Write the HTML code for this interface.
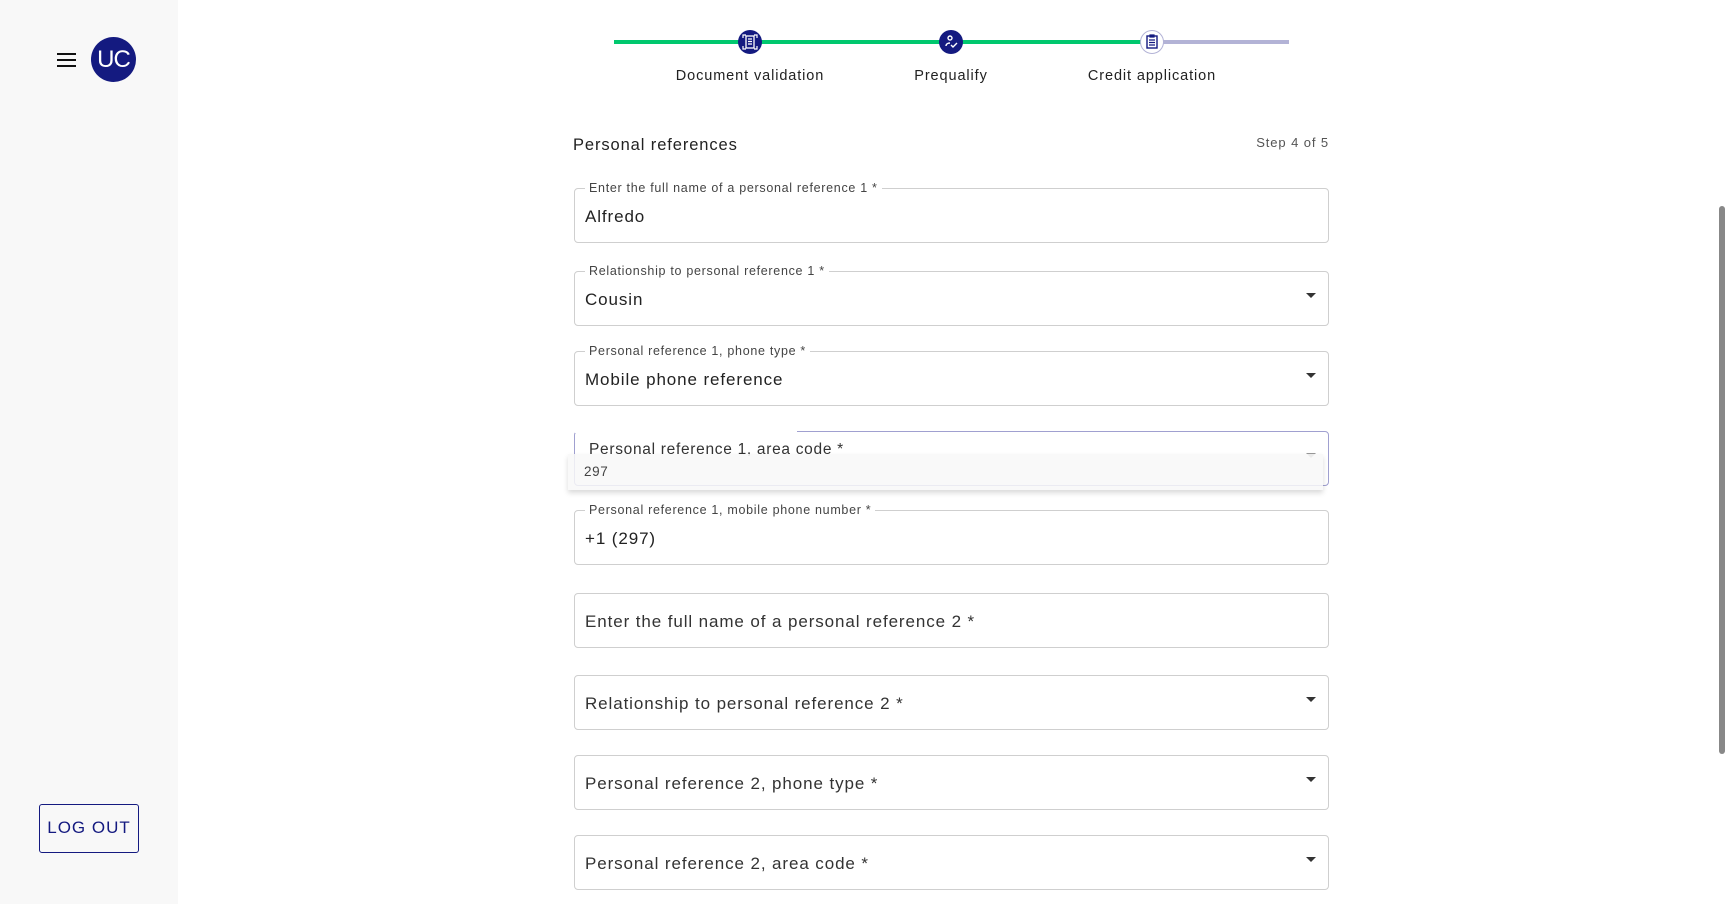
<!DOCTYPE html>
<html><head><style>
*{box-sizing:border-box;margin:0;padding:0}
body{width:1728px;height:904px;overflow:hidden;background:#fff;font-family:"Liberation Sans",sans-serif;color:#222;position:relative;letter-spacing:.6px}
.side{position:absolute;left:0;top:0;width:178px;height:904px;background:#f8f8f8}
.ham{position:absolute;left:57px;top:53px;width:19px}
.ham i{display:block;height:2px;background:#111;margin-bottom:4px}
.av{position:absolute;left:91px;top:37px;width:45px;height:45px;border-radius:50%;background:#141a80;color:#fff;font-size:24px;line-height:45px;text-align:center;letter-spacing:-1px}
.lo{position:absolute;left:39px;top:804px;width:100px;height:49px;border:1.5px solid #141a80;border-radius:3px;color:#141a80;font-size:17px;line-height:46px;text-align:center;letter-spacing:1px}
.line{position:absolute;top:40px;height:4px}
.dot{position:absolute;top:30px;width:24px;height:24px;border-radius:50%;background:#141a80}
.lbl{position:absolute;top:68px;font-size:14.5px;transform:translateX(-50%);white-space:nowrap;color:#222;letter-spacing:.9px}
.f{position:absolute;left:574px;width:755px;height:55px;border:1px solid #cfcfcf;border-radius:4px}
.f .l{position:absolute;left:10px;top:-8px;background:#fff;padding:0 4px;font-size:12.5px;color:#444;letter-spacing:.7px}
.f .v{position:absolute;left:10px;top:18px;font-size:17px;color:#222;letter-spacing:.9px}
.f .p{position:absolute;left:10px;top:18px;font-size:17px;color:#333;letter-spacing:.9px}
.ar{position:absolute;right:12px;top:21px;width:0;height:0;border-left:5px solid transparent;border-right:5px solid transparent;border-top:5px solid #333}
.sb{position:absolute;left:1719px;top:206px;width:6px;height:548px;background:#888;border-radius:3px}
</style></head><body>
<div class="side"><div class="ham"><i></i><i></i><i></i></div><div class="av">UC</div><div class="lo">LOG OUT</div></div>
<div class="line" style="left:614px;width:528px;background:#00c86e"></div>
<div class="line" style="left:1152px;width:137px;background:#b3b3d6"></div>
<div class="dot" style="left:738px"><svg width="24" height="24" viewBox="0 0 24 24"><rect x="8" y="6" width="8" height="12" fill="none" stroke="#fff" stroke-width="1.3"/><path d="M10 9h4M10 11.5h4M10 14h4M5 8V5h3M19 8V5h-3M5 16v3h3M19 16v3h-3" stroke="#fff" stroke-width="1.2" fill="none"/></svg></div>
<div class="dot" style="left:939px"><svg width="24" height="24" viewBox="0 0 24 24"><circle cx="11" cy="8" r="2" fill="none" stroke="#fff" stroke-width="1.4"/><path d="M7 16c0-2 2-3 4-3M12 15l2 2 4-4" stroke="#fff" stroke-width="1.4" fill="none"/></svg></div>
<div class="dot" style="left:1140px;background:#fff;border:1px solid #b3b3d6"><svg width="22" height="22" viewBox="0 0 22 22"><rect x="6" y="5" width="10" height="12" fill="none" stroke="#141a80" stroke-width="1.4"/><path d="M9 4h4v2H9zM8 9h6M8 11.5h6M8 14h6" stroke="#141a80" stroke-width="1.2" fill="none"/></svg></div>
<div class="lbl" style="left:750px">Document validation</div>
<div class="lbl" style="left:951px">Prequalify</div>
<div class="lbl" style="left:1152px">Credit application</div>
<div style="position:absolute;left:573px;top:136px;font-size:16.5px;letter-spacing:.9px">Personal references</div>
<div style="position:absolute;right:399px;top:135px;font-size:13px;color:#555;letter-spacing:.9px">Step 4 of 5</div>
<div class="f" style="top:188px"><span class="l">Enter the full name of a personal reference 1 *</span><span class="v">Alfredo</span></div>
<div class="f" style="top:271px"><span class="l">Relationship to personal reference 1 *</span><span class="v">Cousin</span><span class="ar"></span></div>
<div class="f" style="top:351px"><span class="l">Personal reference 1, phone type *</span><span class="v">Mobile phone reference</span><span class="ar"></span></div>
<div class="f" style="top:431px;border-color:#a0a0d0"><span style="position:absolute;left:0;top:-2px;width:222px;height:3px;background:#fff"></span><span class="l" style="top:9px;font-size:15.5px;background:transparent;color:#333">Personal reference 1, area code *</span><span class="ar" style="border-top-color:#999"></span></div>
<div style="position:absolute;left:568px;top:454px;width:755px;height:36px;background:rgba(248,248,248,.85);box-shadow:0 3px 5px rgba(0,0,0,.15);font-size:13.5px;color:#444;padding:10px 16px">297</div>
<div class="f" style="top:510px"><span class="l">Personal reference 1, mobile phone number *</span><span class="v">+1 (297)</span></div>
<div class="f" style="top:593px"><span class="p">Enter the full name of a personal reference 2 *</span></div>
<div class="f" style="top:675px"><span class="p">Relationship to personal reference 2 *</span><span class="ar"></span></div>
<div class="f" style="top:755px"><span class="p">Personal reference 2, phone type *</span><span class="ar"></span></div>
<div class="f" style="top:835px"><span class="p">Personal reference 2, area code *</span><span class="ar"></span></div>
<div class="sb"></div>
</body></html>
